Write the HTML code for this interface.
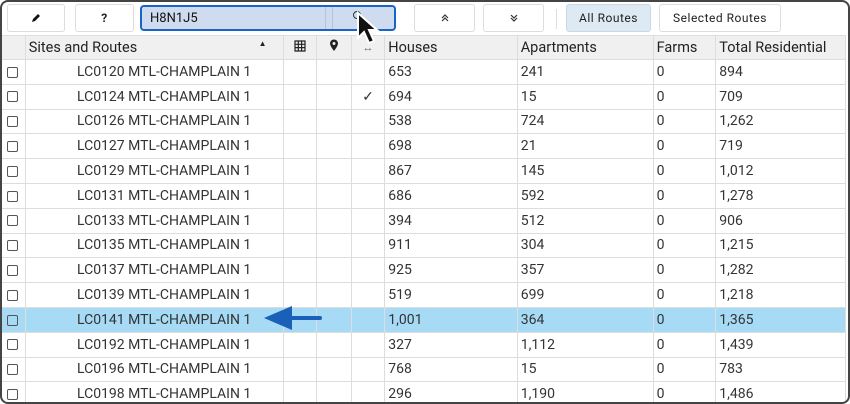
<!DOCTYPE html><html><head><style>
*{box-sizing:border-box;margin:0;padding:0}
body{width:850px;height:404px;background:#fff;font-family:Roboto,"Liberation Sans",sans-serif;overflow:hidden;position:relative}
.frame{position:absolute;left:0;top:0;width:850px;height:404px;border:2px solid #444;border-radius:8px;overflow:hidden;background:#fff}
.btn{position:absolute;top:2px;height:28px;border:1px solid #ddd;border-radius:3px;background:#fff;font-size:12px;color:#222;display:flex;align-items:center;justify-content:center;letter-spacing:.5px}
table{position:absolute;left:-2px;top:33px;border-collapse:collapse;table-layout:fixed;font-size:14px;color:#333}
td,th{border:1px solid #ddd;height:24.8px;padding:0 0 0 3px;white-space:nowrap;overflow:hidden;text-align:left;font-weight:normal}
th{background:#f0f0f0;color:#222;height:24px;font-size:14.5px}
td.s{text-align:center;padding:0 0 0 20px}
td.c{padding:0;text-align:center}
.cb{display:inline-block;width:11px;height:11px;border:1px solid #555;border-radius:2px;vertical-align:middle}
tr.h td{background:#a6daf5}
</style></head><body><div class="frame">
<div class="btn" style="left:5px;width:58px"><svg width="12" height="12"><path d="M2 10L3 7L8 2L10 4L5 9Z" fill="#111"/></svg></div>
<div class="btn" style="left:73px;width:59px;font-weight:bold">?</div>
<div style="position:absolute;left:138px;top:3px;width:256px;height:26px;border:2px solid #1a64c8;border-radius:4px;background:#cfdcef;font-size:13px;padding:4px 8px;color:#111">H8N1J5<div style="position:absolute;left:183px;top:0;width:8px;height:22px;border-left:1px solid #b6c4d8;border-right:1px solid #b6c4d8"></div><div style="position:absolute;left:211px;top:4px;width:8px;height:8px;border:1.5px solid #333;border-radius:50%"></div></div>
<div class="btn" style="left:412px;width:61px"><svg width="10" height="10"><path d="M2 5L5 2L8 5M2 8L5 5L8 8" stroke="#333" fill="none" stroke-width="1.2"/></svg></div>
<div class="btn" style="left:481px;width:61px"><svg width="10" height="10"><path d="M2 2L5 5L8 2M2 5L5 8L8 5" stroke="#333" fill="none" stroke-width="1.2"/></svg></div>
<div style="position:absolute;left:554px;top:7px;height:20px;border-left:1px solid #ddd"></div>
<div class="btn" style="left:564px;width:85px;background:#dde9f3;border-color:#c8d8e6">All Routes</div>
<div class="btn" style="left:657px;width:122px">Selected Routes</div>
<table>
<colgroup><col style="width:25px"><col style="width:259px"><col style="width:34px"><col style="width:35px"><col style="width:34px"><col style="width:134px"><col style="width:137px"><col style="width:63px"><col style="width:130px"></colgroup>
<tr><th></th><th>Sites and Routes<span style="float:right;margin-right:16px;font-size:8px">▲</span></th><th style="text-align:center;padding:0"><svg width="12" height="12"><path d="M1 1H11V11H1ZM1 4.3H11M1 7.6H11M4.3 1V11M7.6 1V11" stroke="#222" fill="none" stroke-width="1.2"/></svg></th><th style="text-align:center;padding:0"><svg width="10" height="13"><path d="M5 12C5 12 1 7 1 4.5A4 4 0 0 1 9 4.5C9 7 5 12 5 12Z" fill="#222"/><circle cx="5" cy="4.5" r="1.5" fill="#f0f0f0"/></svg></th><th style="text-align:center;padding:0;font-size:11px;color:#666">↔</th><th>Houses</th><th>Apartments</th><th>Farms</th><th>Total Residential</th></tr>
<tr><td class="c"><span class="cb"></span></td><td class="s">LC0120 MTL-CHAMPLAIN 1</td><td></td><td></td><td></td><td>653</td><td>241</td><td>0</td><td>894</td></tr>
<tr><td class="c"><span class="cb"></span></td><td class="s">LC0124 MTL-CHAMPLAIN 1</td><td></td><td></td><td class="c">✓</td><td>694</td><td>15</td><td>0</td><td>709</td></tr>
<tr><td class="c"><span class="cb"></span></td><td class="s">LC0126 MTL-CHAMPLAIN 1</td><td></td><td></td><td></td><td>538</td><td>724</td><td>0</td><td>1,262</td></tr>
<tr><td class="c"><span class="cb"></span></td><td class="s">LC0127 MTL-CHAMPLAIN 1</td><td></td><td></td><td></td><td>698</td><td>21</td><td>0</td><td>719</td></tr>
<tr><td class="c"><span class="cb"></span></td><td class="s">LC0129 MTL-CHAMPLAIN 1</td><td></td><td></td><td></td><td>867</td><td>145</td><td>0</td><td>1,012</td></tr>
<tr><td class="c"><span class="cb"></span></td><td class="s">LC0131 MTL-CHAMPLAIN 1</td><td></td><td></td><td></td><td>686</td><td>592</td><td>0</td><td>1,278</td></tr>
<tr><td class="c"><span class="cb"></span></td><td class="s">LC0133 MTL-CHAMPLAIN 1</td><td></td><td></td><td></td><td>394</td><td>512</td><td>0</td><td>906</td></tr>
<tr><td class="c"><span class="cb"></span></td><td class="s">LC0135 MTL-CHAMPLAIN 1</td><td></td><td></td><td></td><td>911</td><td>304</td><td>0</td><td>1,215</td></tr>
<tr><td class="c"><span class="cb"></span></td><td class="s">LC0137 MTL-CHAMPLAIN 1</td><td></td><td></td><td></td><td>925</td><td>357</td><td>0</td><td>1,282</td></tr>
<tr><td class="c"><span class="cb"></span></td><td class="s">LC0139 MTL-CHAMPLAIN 1</td><td></td><td></td><td></td><td>519</td><td>699</td><td>0</td><td>1,218</td></tr>
<tr class="h"><td class="c"><span class="cb"></span></td><td class="s">LC0141 MTL-CHAMPLAIN 1</td><td></td><td></td><td></td><td>1,001</td><td>364</td><td>0</td><td>1,365</td></tr>
<tr><td class="c"><span class="cb"></span></td><td class="s">LC0192 MTL-CHAMPLAIN 1</td><td></td><td></td><td></td><td>327</td><td>1,112</td><td>0</td><td>1,439</td></tr>
<tr><td class="c"><span class="cb"></span></td><td class="s">LC0196 MTL-CHAMPLAIN 1</td><td></td><td></td><td></td><td>768</td><td>15</td><td>0</td><td>783</td></tr>
<tr><td class="c"><span class="cb"></span></td><td class="s">LC0198 MTL-CHAMPLAIN 1</td><td></td><td></td><td></td><td>296</td><td>1,190</td><td>0</td><td>1,486</td></tr>
</table>
<svg style="position:absolute;left:260px;top:298px" width="64" height="36"><path d="M58 18H30" stroke="#1a5fb8" stroke-width="4" stroke-linecap="round"/><path d="M2 18L30 6V30Z" fill="#1a5fb8"/></svg>
<svg style="position:absolute;left:353px;top:9px" width="32" height="40"><path d="M3 2L3 27L9 21L14 32L19 30L14 19L22 19Z" fill="#111" stroke="#fff" stroke-width="2"/></svg>
</div></body></html>
